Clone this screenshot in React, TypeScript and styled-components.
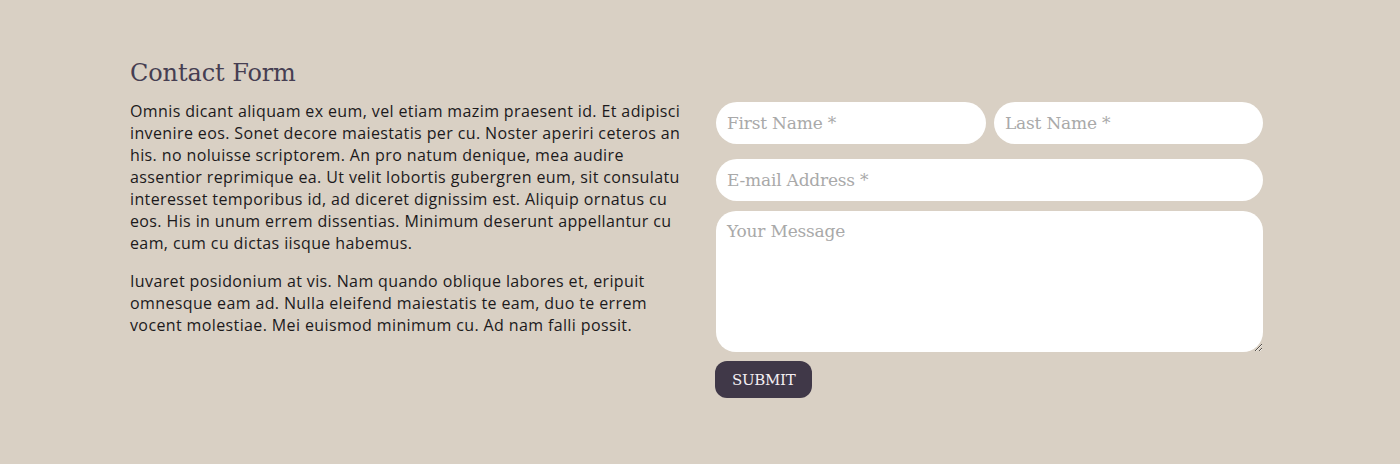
import styled, { createGlobalStyle } from "styled-components";

const GlobalStyle = createGlobalStyle`
  html, body {
    margin: 0;
    padding: 0;
    background: #d9d0c4;
  }
  * { box-sizing: border-box; }
`;

const Section = styled.section`
  width: 1400px;
  height: 464px;
  padding: 56px 0 0 130px;
  background: #d9d0c4;
`;

const Title = styled.h2`
  font-family: "DejaVu Serif", "Liberation Serif", serif;
  font-weight: 400;
  font-size: 24px;
  line-height: 34px;
  letter-spacing: -0.1px;
  color: #463e52;
  margin: 0 0 10px;
`;

const Columns = styled.div`
  display: grid;
  grid-template-columns: 556px 547px;
  gap: 30px;
  align-items: start;
`;

const Text = styled.div`
  font-family: "Open Sans", "Noto Sans", sans-serif;
  font-size: 16px;
  line-height: 22px;
  color: #1c1a1c;
  letter-spacing: 0.38px;

  p {
    margin: 0 0 16px;
  }
`;

const Form = styled.form`
  display: flex;
  flex-direction: column;
  padding-top: 2px;
`;

const NameRow = styled.div`
  display: grid;
  grid-template-columns: 270px 269px;
  gap: 8px;
  margin-bottom: 15px;
`;

const fieldBase = `
  border: none;
  outline: none;
  background: #fff;
  font-family: "DejaVu Serif", "Liberation Serif", serif;
  font-size: 17px;
  color: #333;
  padding: 0 11px;
  width: 100%;
  &::placeholder {
    color: #a9a9a9;
    letter-spacing: -0.2px;
  }
`;

const Input = styled.input`
  ${fieldBase}
  height: 42px;
  border-radius: 21px;
`;

const EmailInput = styled(Input)`
  margin-bottom: 10px;
`;

const Message = styled.textarea`
  ${fieldBase}
  height: 141px;
  border-radius: 20px;
  padding: 10px 11px;
  resize: vertical;
  margin-bottom: 9px;
  display: block;
`;

const Submit = styled.button`
  align-self: flex-start;
  margin-left: -1px;
  height: 37px;
  padding: 0 17px;
  border: none;
  border-radius: 12px;
  background: #403848;
  color: #f3eef2;
  font-family: "DejaVu Serif", "Liberation Serif", serif;
  font-size: 15px;
  letter-spacing: -0.3px;
  cursor: pointer;
`;

export default function App() {
  return (
    <>
      <GlobalStyle />
      <Section>
        <Title>Contact Form</Title>
        <Columns>
          <Text>
            <p>
              Omnis dicant aliquam ex eum, vel etiam mazim praesent id. Et adipisci
              invenire eos. Sonet decore maiestatis per cu. Noster aperiri ceteros an
              his. no noluisse scriptorem. An pro natum denique, mea audire
              assentior reprimique ea. Ut velit lobortis gubergren eum, sit consulatu
              interesset temporibus id, ad diceret dignissim est. Aliquip ornatus cu
              eos. His in unum errem dissentias. Minimum deserunt appellantur cu
              eam, cum cu dictas iisque habemus.
            </p>
            <p>
              Iuvaret posidonium at vis. Nam quando oblique labores et, eripuit
              omnesque eam ad. Nulla eleifend maiestatis te eam, duo te errem
              vocent molestiae. Mei euismod minimum cu. Ad nam falli possit.
            </p>
          </Text>
          <Form onSubmit={(e) => e.preventDefault()}>
            <NameRow>
              <Input placeholder="First Name *" />
              <Input placeholder="Last Name *" />
            </NameRow>
            <EmailInput placeholder="E-mail Address *" />
            <Message placeholder="Your Message" />
            <Submit type="submit">SUBMIT</Submit>
          </Form>
        </Columns>
      </Section>
    </>
  );
}
